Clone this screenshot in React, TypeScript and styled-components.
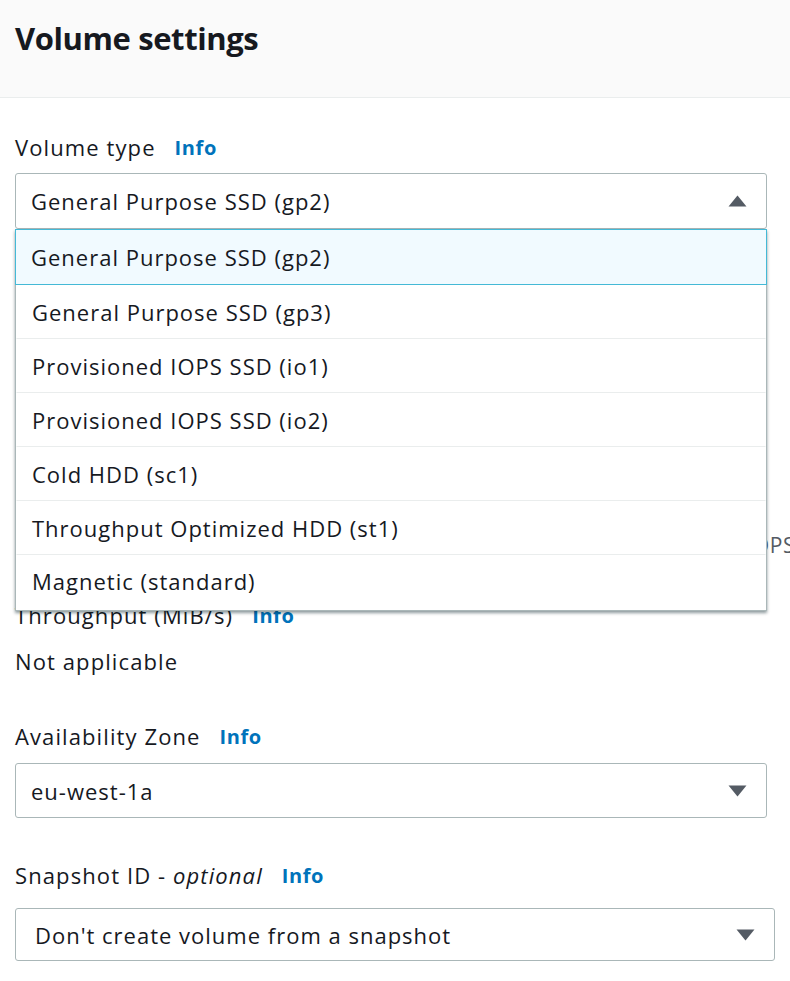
import React from 'react';
import styled, { createGlobalStyle } from 'styled-components';

const GlobalStyle = createGlobalStyle`
  body {
    margin: 0;
    background: #ffffff;
    font-family: 'Open Sans', 'Noto Sans', Arial, sans-serif;
    color: #16191f;
    overflow: hidden;
  }
`;

const Page = styled.div`
  width: 790px;
  height: 981px;
  overflow: hidden;
`;

const Header = styled.header`
  box-sizing: border-box;
  height: 98px;
  padding: 16px 15px 0;
  background: #fafafa;
  border-bottom: 1px solid #eaeded;
`;

const Title = styled.h2`
  margin: 0;
  font-size: 31px;
  line-height: 44px;
  font-weight: 700;
  letter-spacing: -0.4px;
  color: #16191f;
`;

const Content = styled.div`
  padding: 34px 15px 0;
`;

const Field = styled.div<{ $gap?: number }>`
  margin-bottom: ${(p) => p.$gap ?? 0}px;
`;

const Label = styled.div<{ $space?: number }>`
  display: flex;
  align-items: center;
  gap: 19px;
  height: 30px;
  margin-bottom: ${(p) => p.$space ?? 11}px;
  font-size: 22px;
  letter-spacing: 1.1px;
  color: #16191f;
  em {
    font-style: italic;
  }
`;

const Info = styled.span`
  font-size: 20px;
  font-weight: 700;
  letter-spacing: 0.6px;
  color: #0073bb;
`;

const SelectWrap = styled.div`
  position: relative;
`;

const SelectBox = styled.div<{ $width?: number; $pad?: number; $height?: number }>`
  box-sizing: border-box;
  width: ${(p) => p.$width ?? 752}px;
  height: ${(p) => p.$height ?? 56}px;
  display: flex;
  align-items: center;
  justify-content: space-between;
  padding: 0 19px 0 ${(p) => p.$pad ?? 15}px;
  border: 1px solid #aab7b8;
  border-radius: 3px;
  background: #ffffff;
  font-size: 22px;
  letter-spacing: 1px;
  color: #16191f;
`;

const Caret = styled.svg`
  width: 19px;
  height: 12px;
  fill: #545b64;
`;

const Menu = styled.ul`
  position: absolute;
  top: 100%;
  left: 0;
  box-sizing: border-box;
  width: 752px;
  margin: 0;
  padding: 0;
  list-style: none;
  background: #ffffff;
  border: 1px solid #aab7b8;
  border-top: none;
  box-shadow: 0 2px 3px rgba(0, 28, 36, 0.45);
  z-index: 10;
`;

const Option = styled.li<{ $active?: boolean }>`
  box-sizing: border-box;
  height: ${(p) => (p.$active ? 56 : 54)}px;
  display: flex;
  align-items: center;
  padding-left: 15px;
  font-size: 22px;
  letter-spacing: 1px;
  color: #16191f;
  border: 1px solid ${(p) => (p.$active ? '#44b9d6' : 'transparent')};
  border-bottom-color: ${(p) => (p.$active ? '#44b9d6' : '#eaeded')};
  background: ${(p) => (p.$active ? '#f1faff' : '#ffffff')};
  margin: ${(p) => (p.$active ? '0 -1px' : '0')};
  &:last-child {
    height: 55px;
    padding-bottom: 3px;
    border-bottom-color: transparent;
  }
`;

const Value = styled.div`
  font-size: 22px;
  line-height: 30px;
  letter-spacing: 1.1px;
  color: #16191f;
`;

const Hidden = styled.div<{ $height: number }>`
  height: ${(p) => p.$height}px;
`;

const Help = styled.div`
  margin-right: -20px;
  text-align: right;
  white-space: nowrap;
  font-size: 21px;
  line-height: 30px;
  letter-spacing: 0.6px;
  color: #545b64;
`;

const CaretIcon = ({ up }: { up?: boolean }) => (
  <Caret viewBox="0 0 19 12">
    {up ? <path d="M9.5 0.5 L18.5 11.5 H0.5 Z" /> : <path d="M0.5 0.5 H18.5 L9.5 11.5 Z" />}
  </Caret>
);

const volumeTypes = [
  'General Purpose SSD (gp2)',
  'General Purpose SSD (gp3)',
  'Provisioned IOPS SSD (io1)',
  'Provisioned IOPS SSD (io2)',
  'Cold HDD (sc1)',
  'Throughput Optimized HDD (st1)',
  'Magnetic (standard)',
];

const App = () => {
  return (
    <Page>
      <GlobalStyle />
      <Header>
        <Title>Volume settings</Title>
      </Header>
      <Content>
        <Field>
          <Label>
            Volume type <Info>Info</Info>
          </Label>
          <SelectWrap>
            <SelectBox>
              <span>General Purpose SSD (gp2)</span>
              <CaretIcon up />
            </SelectBox>
            <Menu>
              {volumeTypes.map((type, i) => (
                <Option key={type} $active={i === 0}>
                  {type}
                </Option>
              ))}
            </Menu>
          </SelectWrap>
        </Field>

        {/* size and IOPS fields sit under the open menu */}
        <Hidden $height={301} />
        <Field $gap={40}>
          <Help>IOPS</Help>
        </Field>

        <Field $gap={45}>
          <Label $space={16}>
            Throughput (MiB/s) <Info>Info</Info>
          </Label>
          <Value>Not applicable</Value>
        </Field>

        <Field $gap={42}>
          <Label $space={12}>
            Availability Zone <Info>Info</Info>
          </Label>
          <SelectBox $height={55}>
            <span>eu-west-1a</span>
            <CaretIcon />
          </SelectBox>
        </Field>

        <Field>
          <Label $space={18}>
            <span>
              Snapshot ID - <em>optional</em>
            </span>
            <Info>Info</Info>
          </Label>
          <SelectBox $width={760} $pad={19} $height={53}>
            <span>Don't create volume from a snapshot</span>
            <CaretIcon />
          </SelectBox>
        </Field>
      </Content>
    </Page>
  );
};

export default App;
